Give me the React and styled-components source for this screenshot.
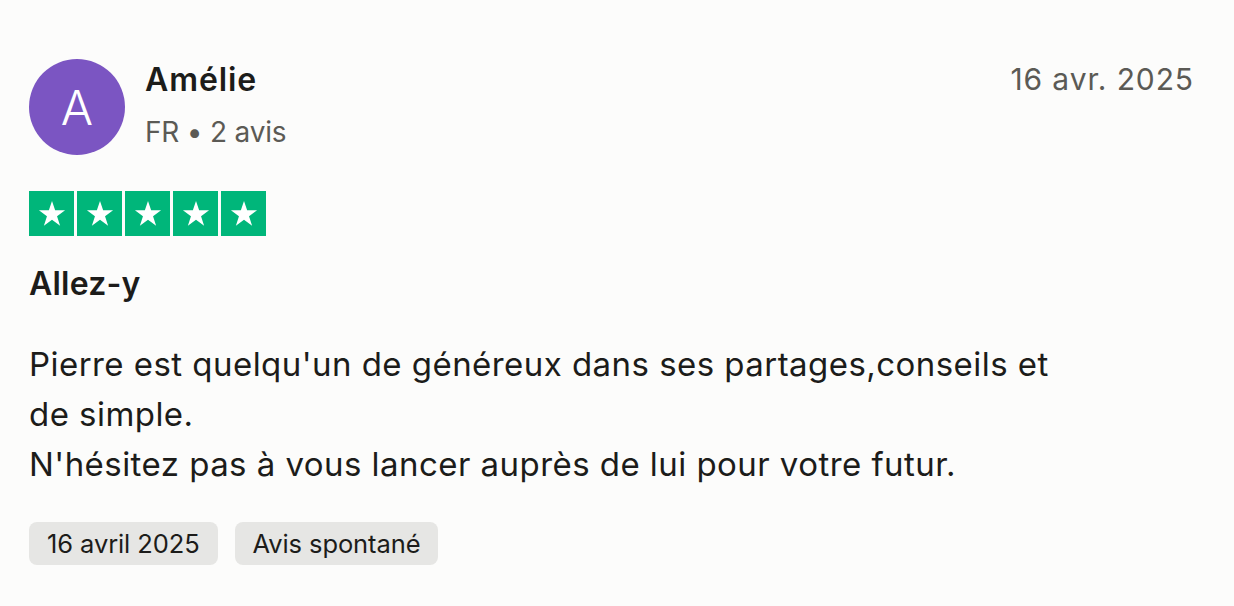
import styled, { createGlobalStyle } from "styled-components";

const GlobalStyle = createGlobalStyle`
	html, body {
		margin: 0;
		padding: 0;
		background: #fcfcfb;
	}
	body {
		font-family: Inter, "Noto Sans", sans-serif;
		color: #1c1c1a;
	}
`;

const Star = () => (
	<svg width="32" height="32" viewBox="0 0 24 24">
		<path
			fill="#fff"
			d="M12 2.2l2.35 7.05h7.45l-6.02 4.37 2.3 7.1L12 16.3l-6.08 4.42 2.3-7.1L2.2 9.25h7.45z"
		/>
	</svg>
);

const App = () => {
	return (
		<>
			<GlobalStyle />
			<Review>
				<Header>
					<Avatar>A</Avatar>
					<Who>
						<Name>Amélie</Name>
						<Meta>FR • 2 avis</Meta>
					</Who>
					<DateTop>16 avr. 2025</DateTop>
				</Header>

				<Stars>
					{[0, 1, 2, 3, 4].map((i) => (
						<StarBox key={i}>
							<Star />
						</StarBox>
					))}
				</Stars>

				<Title>Allez-y</Title>

				<Body>
					Pierre est quelqu'un de généreux dans ses partages,conseils et
					<br />
					de simple.
					<br />
					N'hésitez pas à vous lancer auprès de lui pour votre futur.
				</Body>

				<Tags>
					<Tag>16 avril 2025</Tag>
					<Tag>Avis spontané</Tag>
				</Tags>
			</Review>
		</>
	);
};

export default App;

const Review = styled.div`
	display: flex;
	flex-direction: column;
	padding: 59px 40px 0 29px;
	width: 1234px;
	box-sizing: border-box;
`;

const Header = styled.div`
	display: flex;
	align-items: flex-start;
	gap: 20px;
`;

const Avatar = styled.div`
	width: 96px;
	height: 96px;
	border-radius: 50%;
	background: #7b55c2;
	color: #fff;
	display: flex;
	align-items: center;
	justify-content: center;
	font-size: 48px;
	font-weight: 300;
	flex-shrink: 0;
`;

const Who = styled.div`
	display: flex;
	flex-direction: column;
	flex: 1;
	padding-top: 1px;
`;

const Name = styled.div`
	font-size: 32px;
	font-weight: 600;
	line-height: 40px;
	letter-spacing: 0.9px;
`;

const Meta = styled.div`
	font-size: 28px;
	line-height: 34px;
	margin-top: 15px;
	color: #5b5a55;
	letter-spacing: -0.2px;
`;

const DateTop = styled.div`
	font-size: 30px;
	line-height: 40px;
	color: #5b5a55;
	letter-spacing: 0.9px;
`;

const Stars = styled.div`
	display: flex;
	gap: 3px;
	margin-top: 36px;
`;

const StarBox = styled.div`
	width: 45px;
	height: 45px;
	background: #00b67a;
	display: flex;
	align-items: center;
	justify-content: center;
`;

const Title = styled.div`
	font-size: 32px;
	font-weight: 600;
	line-height: 40px;
	margin-top: 28px;
	letter-spacing: 0.2px;
`;

const Body = styled.p`
	margin: 35px 0 0;
	font-size: 33px;
	line-height: 50px;
	letter-spacing: 0.45px;
`;

const Tags = styled.div`
	display: flex;
	gap: 17px;
	margin-top: 33px;
`;

const Tag = styled.div`
	background: #e6e6e4;
	border-radius: 8px;
	height: 43px;
	padding: 0 18px;
	display: flex;
	align-items: center;
	font-size: 25.5px;
	letter-spacing: -0.1px;
`;
